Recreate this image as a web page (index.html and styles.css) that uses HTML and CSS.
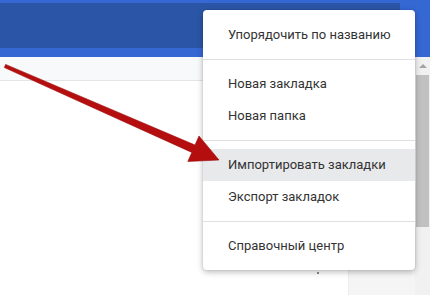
FILE: index.html
```html
<!DOCTYPE html>
<html lang="ru">
<head>
<meta charset="utf-8">
<title>Закладки</title>
<link rel="stylesheet" href="styles.css">
</head>
<body>
<div class="page">
  <header class="toolbar">
    <div class="search"></div>
  </header>
  <div class="main">
    <div class="content">
      <div class="subheader"></div>
      <div class="body">
        <div class="list">
          <div class="dots"><span></span><span></span><span></span></div>
        </div>
        <div class="side"></div>
      </div>
    </div>
    <div class="scrollbar">
      <div class="sb-up"><span class="tri"></span></div>
      <div class="sb-thumb"></div>
    </div>
  </div>

  <div class="menu">
    <div class="item">Упорядочить по названию</div>
    <div class="sep"></div>
    <div class="item">Новая закладка</div>
    <div class="item">Новая папка</div>
    <div class="sep"></div>
    <div class="item active">Импортировать закладки</div>
    <div class="item">Экспорт закладок</div>
    <div class="sep"></div>
    <div class="item">Справочный центр</div>
  </div>

  <svg class="pointer" width="430" height="295" viewBox="0 0 430 295">
    <polygon points="5.6,64.4 195,145 199,136 219,160 187.8,161.5 191.8,152.4 4.4,67.6" fill="#b50e0e" stroke="#9c0a0a" stroke-width="0.6" stroke-linejoin="round"/>
  </svg>
</div>
</body>
</html>
```
FILE: styles.css
```css
html, body {
  margin: 0;
  padding: 0;
}
body {
  font-family: Roboto, "Liberation Sans", Arial, sans-serif;
  background: #ffffff;
}
.page {
  position: relative;
  width: 430px;
  height: 295px;
  overflow: hidden;
  display: flex;
  flex-direction: column;
}
.toolbar {
  height: 57px;
  box-sizing: border-box;
  padding-top: 3px;
  background: #3568d3;
  flex: none;
}
.search {
  width: 400px;
  height: 45px;
  background: #2b55a6;
}
.main {
  flex: 1;
  display: flex;
}
.content {
  flex: 1;
  display: flex;
  flex-direction: column;
}
.subheader {
  height: 23px;
  background: #f8f9fa;
  border-bottom: 1px solid #e3e4e6;
  flex: none;
}
.body {
  flex: 1;
  display: flex;
}
.list {
  flex: 1;
  background: #ffffff;
  box-sizing: border-box;
  padding: 183px 0 0 317px;
}
.dots {
  display: flex;
  flex-direction: column;
  gap: 2px;
  width: 2px;
}
.dots span {
  width: 2px;
  height: 2px;
  border-radius: 50%;
  background: #5f6368;
}
.side {
  width: 67px;
  background: #f5f5f6;
  border-left: 1px solid #ececec;
  box-sizing: border-box;
}
.scrollbar {
  width: 15px;
  background: #f1f1f1;
  display: flex;
  flex-direction: column;
}
.sb-up {
  height: 18px;
  display: flex;
  align-items: center;
  justify-content: center;
}
.tri {
  width: 0;
  height: 0;
  border-left: 4px solid transparent;
  border-right: 4px solid transparent;
  border-bottom: 4px solid #a3a3a3;
}
.sb-thumb {
  height: 152px;
  margin: 0 1px 0 1px;
  background: #c1c1c1;
}
.menu {
  position: absolute;
  left: 203px;
  top: 10px;
  width: 212px;
  box-sizing: border-box;
  padding: 9px 0 8px;
  background: #ffffff;
  border-radius: 4px;
  box-shadow: 0 2px 6px rgba(0, 0, 0, 0.28), 0 0 2px rgba(0, 0, 0, 0.12);
}
.item {
  height: 32px;
  line-height: 32px;
  padding-left: 25px;
  font-size: 13px;
  color: #333333;
  white-space: nowrap;
}
.item.active {
  background: #e8e9eb;
}
.sep {
  height: 1px;
  background: #e0e0e0;
  margin: 8px 0;
}
.pointer {
  position: absolute;
  left: 0;
  top: 0;
  pointer-events: none;
}
```
